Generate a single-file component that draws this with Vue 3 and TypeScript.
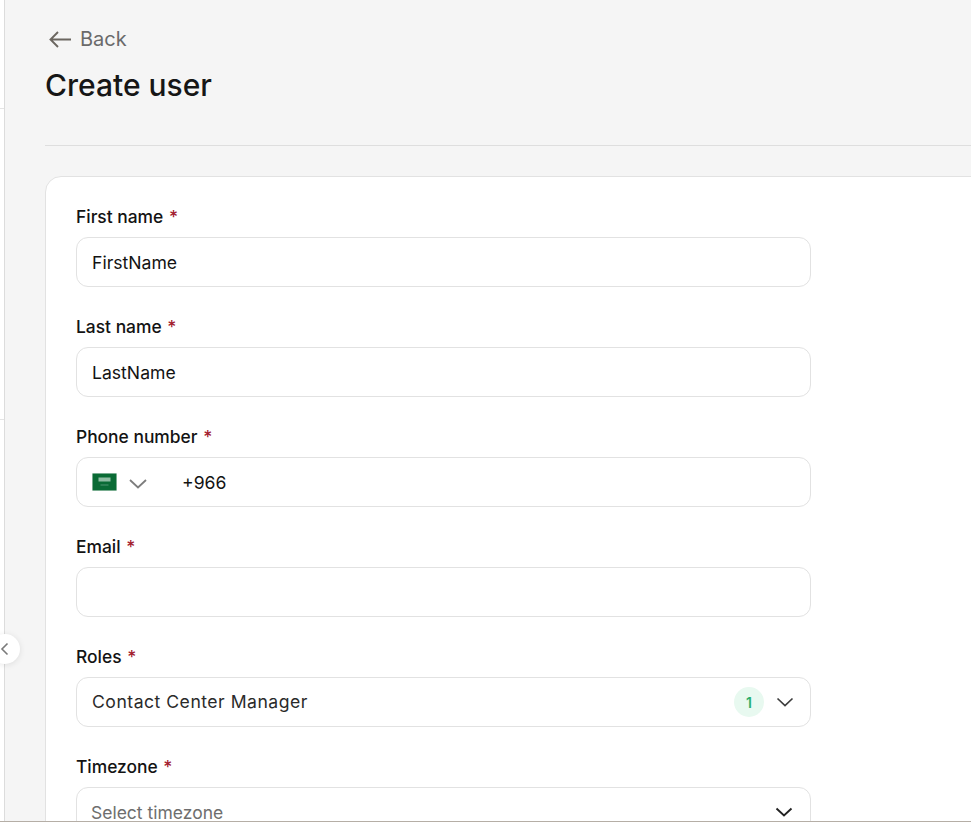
<template>
  <div class="page">
    <aside class="rail">
      <div class="rail-top"></div>
      <div class="rail-mid"></div>
      <button class="collapse" type="button" aria-label="Collapse">
        <svg width="10" height="14" viewBox="0 0 10 14" fill="none">
          <path d="M7.5 1.5 L2 7 L7.5 12.5" stroke="#7a7a7a" stroke-width="1.6" />
        </svg>
      </button>
    </aside>

    <main class="main">
      <a class="back">
        <svg width="24" height="24" viewBox="0 0 24 24" fill="none">
          <path d="M23 12.5 H2.5 M10 5 L2.5 12.5 L10 20" stroke="#6b6660" stroke-width="1.9" />
        </svg>
        <span>Back</span>
      </a>
      <h1 class="title">Create user</h1>
      <hr class="divider" />

      <section class="card">
        <div class="field">
          <label class="label">First name <span class="req">*</span></label>
          <div class="control">{{ form.firstName }}</div>
        </div>
        <div class="field">
          <label class="label">Last name <span class="req">*</span></label>
          <div class="control">{{ form.lastName }}</div>
        </div>
        <div class="field">
          <label class="label">Phone number <span class="req">*</span></label>
          <div class="control">
            <svg class="flag" width="25" height="18" viewBox="0 0 25 18">
              <rect width="25" height="18" fill="#e9f1ec" />
              <rect x="0.5" y="0.5" width="24" height="17" fill="#0a6b35" />
              <rect x="6.5" y="4.5" width="12" height="4" fill="#8fbda3" />
              <rect x="8.5" y="11.5" width="8" height="1" fill="#4f9672" />
            </svg>
            <svg class="flag-chevron" width="18" height="10" viewBox="0 0 18 10" fill="none">
              <path d="M1 1 L9 8.5 L17 1" stroke="#7d7d7d" stroke-width="1.8" />
            </svg>
            <span class="dial">{{ form.dialCode }}</span>
          </div>
        </div>
        <div class="field">
          <label class="label">Email <span class="req">*</span></label>
          <div class="control"></div>
        </div>
        <div class="field">
          <label class="label">Roles <span class="req">*</span></label>
          <div class="control">
            <span class="role">{{ form.role }}</span>
            <span class="count">1</span>
            <svg class="chevron" width="18" height="10" viewBox="0 0 18 10" fill="none">
              <path d="M1.5 1.5 L9 8.5 L16.5 1.5" stroke="#3d3d3d" stroke-width="1.7" />
            </svg>
          </div>
        </div>
        <div class="field">
          <label class="label">Timezone <span class="req">*</span></label>
          <div class="control">
            <span class="placeholder">Select timezone</span>
            <svg class="chevron tz" width="18" height="10" viewBox="0 0 18 10" fill="none">
              <path d="M1.5 1.5 L9 8.5 L16.5 1.5" stroke="#222" stroke-width="1.9" />
            </svg>
          </div>
        </div>
      </section>
    </main>
    <div class="window-edge"></div>
  </div>
</template>

<script setup lang="ts">
import { reactive } from "vue";

const form = reactive({
  firstName: "FirstName",
  lastName: "LastName",
  dialCode: "+966",
  role: "Contact Center Manager",
});
</script>

<style>
html,
body {
  margin: 0;
  overflow: hidden;
  background: #f5f5f5;
}
</style>

<style scoped>
.page {
  position: relative;
  display: flex;
  width: 971px;
  height: 822px;
  overflow: hidden;
  background: #f5f5f5;
  color: #131313;
  font-family: Inter, "Liberation Sans", sans-serif;
}
.rail {
  flex: 0 0 4px;
  border-right: 1px solid #dcdcdc;
  background: #fff;
}
.rail-top {
  height: 108px;
  border-bottom: 1px solid #e4e4e4;
}
.rail-mid {
  height: 310px;
  border-bottom: 1px solid #e4e4e4;
}
.collapse {
  position: absolute;
  left: -10px;
  top: 634px;
  z-index: 2;
  display: flex;
  align-items: center;
  justify-content: center;
  width: 30px;
  height: 30px;
  padding: 0;
  border: 0;
  border-radius: 50%;
  background: #fff;
  box-shadow: 0 1px 6px rgba(0, 0, 0, 0.1);
}
.main {
  flex: 0 0 auto;
  width: 966px;
  padding: 27px 0 0 40px;
  box-sizing: border-box;
}
.back {
  display: flex;
  align-items: center;
  gap: 8px;
  height: 24px;
  padding-left: 3px;
  color: #6a6a6a;
  font-size: 20px;
  line-height: 24px;
}
.title {
  margin: 12px 0 0;
  color: #161616;
  font-size: 30px;
  font-weight: 500;
  line-height: 44px;
}
.divider {
  height: 1px;
  margin: 38px 0 30px;
  border: 0;
  background: #dedede;
}
.card {
  width: 1000px;
  padding: 29px 30px 40px;
  border: 1px solid #e2e2e2;
  border-radius: 16px;
  background: #fff;
  box-sizing: border-box;
}
.field {
  margin-bottom: 29px;
}
.label {
  display: block;
  height: 22px;
  margin-bottom: 9px;
  font-size: 17.4px;
  font-weight: 500;
  line-height: 22px;
}
.req {
  margin-left: 1px;
  color: #a3202f;
}
.control {
  display: flex;
  align-items: center;
  width: 735px;
  height: 50px;
  padding: 0 16px 0 15px;
  border: 1px solid #e2e2e2;
  border-radius: 12px;
  box-sizing: border-box;
  font-size: 17.6px;
}
.flag {
  flex: none;
}
.flag-chevron {
  flex: none;
  margin: 3px 0 0 12px;
}
.dial {
  margin-left: 35px;
  padding-top: 1px;
}
.role {
  flex: 1;
  padding-bottom: 2px;
  color: #2a2a2a;
  letter-spacing: 0.5px;
}
.count {
  display: flex;
  align-items: center;
  justify-content: center;
  width: 30px;
  height: 30px;
  margin-right: 12px;
  border-radius: 50%;
  background: #e8f9f0;
  color: #2aae6c;
  font-size: 14px;
  font-weight: 600;
}
.placeholder {
  flex: 1;
  margin-left: -1px;
  color: #6e6e6e;
  font-size: 17.5px;
}
.chevron {
  flex: none;
}
.chevron.tz {
  margin-right: 1px;
}
.window-edge {
  position: absolute;
  left: 0;
  right: 0;
  bottom: 0;
  height: 1px;
  background: #b5aea6;
}
</style>
